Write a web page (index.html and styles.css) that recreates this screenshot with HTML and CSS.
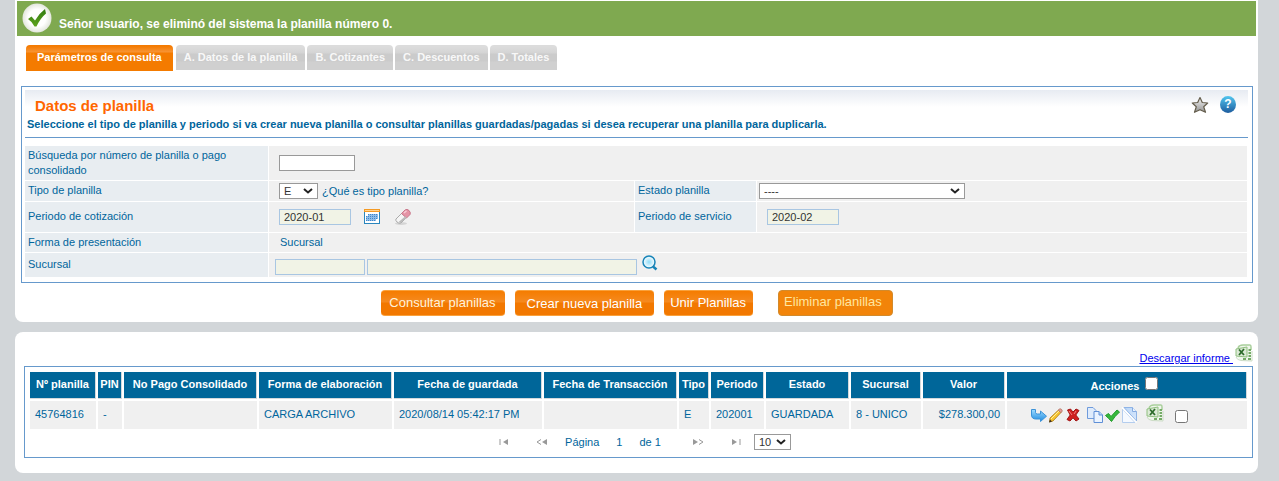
FILE: index.html
```html
<!DOCTYPE html>
<html lang="es">
<head>
<meta charset="utf-8">
<title>Datos de planilla</title>
<link rel="stylesheet" href="styles.css">
</head>
<body>
<svg class="defs" width="0" height="0" aria-hidden="true">
  <defs>
    <linearGradient id="gGrey" x1="0" y1="0" x2="0" y2="1"><stop offset="0" stop-color="#f4f4f4"/><stop offset="1" stop-color="#949494"/></linearGradient>
    <linearGradient id="gArrow" x1="0" y1="0" x2="0" y2="1"><stop offset="0" stop-color="#9fdcff"/><stop offset="1" stop-color="#1e8be0"/></linearGradient>
    <linearGradient id="gPage" x1="0" y1="0" x2="1" y2="1"><stop offset="0" stop-color="#b9d6f8"/><stop offset="1" stop-color="#d9e8fc"/></linearGradient>
    <radialGradient id="gLens"><stop offset="0" stop-color="#8fdcf8"/><stop offset="1" stop-color="#ffffff"/></radialGradient>
    <radialGradient id="gSeal"><stop offset="0.6" stop-color="#ffffff"/><stop offset="1" stop-color="#e2e6dc"/></radialGradient>
    <linearGradient id="gCheck" x1="0" y1="0" x2="0" y2="1"><stop offset="0" stop-color="#2f7a10"/><stop offset="1" stop-color="#5fa41e"/></linearGradient>
    <symbol id="excel" viewBox="0 0 18 18">
      <path d="M3 1 15 1 16 3 16 17 5 16 1 12Z" fill="#f0f6ec"/>
      <path d="M3 4Q4 1 8 1H15Q16 1 16 3V6" fill="none" stroke="#a9cf9c" stroke-width="1.500"/>
      <path d="M1 5 12 3V13L1 12Z" fill="#dcead6" stroke="#8fc07f"/>
      <path d="M4 5.500 9 11M9 5 4 11" stroke="#2d6b2b" stroke-width="1.800"/>
      <path d="M13.500 6h2.500M13.500 9h2.500M13.500 12h2.500M8 15h3M13 15h3" stroke="#74ab66" stroke-width="2"/>
      <path d="M1 13Q2 16 6 16.500L17 17V7" fill="none" stroke="#cbdcc5"/>
    </symbol>
  </defs>
</svg>

<main class="page">
  <section class="panel panel-top">
    <div class="notice" role="status">
      <svg class="seal" width="30" height="30" viewBox="0 0 30 30" aria-hidden="true"><circle cx="15" cy="15" r="14.500" fill="url(#gSeal)"/><path d="M6 16 9.500 13.500 13 17.500Q17 10.500 23 6L24 10.500Q18.500 15 14.500 23.500H12.500Q10 18.500 6 16Z" fill="url(#gCheck)"/></svg>
      <p>Señor usuario, se eliminó del sistema la planilla número 0.</p>
    </div>

    <nav class="tabs">
      <button class="tab tab-on" type="button">Parámetros de consulta</button>
      <button class="tab" type="button">A. Datos de la planilla</button>
      <button class="tab" type="button">B. Cotizantes</button>
      <button class="tab" type="button">C. Descuentos</button>
      <button class="tab" type="button">D. Totales</button>
    </nav>

    <form class="box">
      <header class="box-head">
        <div class="head-text">
          <h1>Datos de planilla</h1>
          <p>Seleccione el tipo de planilla y periodo si va crear nueva planilla o consultar planillas guardadas/pagadas si desea recuperar una planilla para duplicarla.</p>
        </div>
        <div class="head-icons">
          <button class="icon" type="button" aria-label="Favorito"><svg width="18" height="18" viewBox="0 0 18 18"><path d="M9 1.500 11.300 6.500 16.700 7 12.700 10.700 14.500 16.300 9 13.700 3.500 16.300 5.300 10.700 1.300 7 6.700 6.500Z" fill="url(#gGrey)" stroke="#645d4c" stroke-width="1.200" stroke-linejoin="round"/></svg></button>
          <button class="icon help" type="button" aria-label="Ayuda">?</button>
        </div>
      </header>

      <table class="fields">
        <colgroup><col class="c-label"><col class="c-value"><col class="c-label2"><col></colgroup>
        <tr class="r-tall">
          <th><label for="num">Búsqueda por número de planilla o pago consolidado</label></th>
          <td colspan="3"><div class="line"><input class="text" id="num" type="text"></div></td>
        </tr>
        <tr class="r-type">
          <th><label for="tipo">Tipo de planilla</label></th>
          <td><div class="line"><select class="sel-type" id="tipo"><option>E</option></select><span class="hint">¿Qué es tipo planilla?</span></div></td>
          <th><label for="estado">Estado planilla</label></th>
          <td class="flush"><div class="line"><select class="sel-state" id="estado"><option>----</option></select></div></td>
        </tr>
        <tr class="r-mid">
          <th><label for="cot">Periodo de cotización</label></th>
          <td><div class="line">
            <input class="text shaded" id="cot" type="text" value="2020-01" readonly>
            <button class="icon calendar" type="button" aria-label="Calendario"><svg width="16" height="16" viewBox="0 0 16 16" shape-rendering="crispEdges"><path fill="#fff" stroke="#2a86bd" d="M.5.500h15v14H.5z"/><path fill="#f49a24" d="M0 0h16v3H0z"/><path fill="#ffd391" d="M1 1h14v1H1z"/><path fill="#8fbde8" d="M4 5h10v5h-2v2H2V7h2z"/><path stroke="#3f86cc" stroke-dasharray="1 1" d="M4 5.500h10M2 7.500h12M2 9.500h12M2 11.500h10"/></svg></button>
            <button class="icon" type="button" aria-label="Borrar"><svg width="18" height="18" viewBox="0 0 18 18"><ellipse cx="7" cy="15.500" rx="6" ry="1.500" fill="#d4d4d4"/><path d="M2 11 8 5 13 9 7 15Q5 16 3 14T2 11Z" fill="#f5f5f5" stroke="#aaa"/><path d="M7.500 5.500 11 2Q13 .5 15 2.500T16 6.500L12.500 10Z" fill="#e594a6" stroke="#c8788b"/><path d="M10 5 12.500 2.700" stroke="#f8cbd4" stroke-width="1.500"/><path d="M5.500 14.500 12 9" stroke="#bbb" stroke-width="2"/></svg></button>
          </div></td>
          <th><label for="serv">Periodo de servicio</label></th>
          <td><div class="line"><input class="text shaded" id="serv" type="text" value="2020-02" readonly></div></td>
        </tr>
        <tr class="r-short">
          <th>Forma de presentación</th>
          <td colspan="3"><div class="line plain">Sucursal</div></td>
        </tr>
        <tr class="r-last">
          <th><label for="suc">Sucursal</label></th>
          <td class="near" colspan="3"><div class="line">
            <input class="text shaded code" id="suc" type="text" readonly>
            <input class="text shaded name" type="text" aria-label="Nombre de sucursal" readonly>
            <button class="icon search" type="button" aria-label="Buscar"><svg width="16" height="16" viewBox="0 0 16 16"><circle cx="7" cy="7" r="6" fill="url(#gLens)" stroke="#1784b8" stroke-width="1.500"/><path d="M11 11.500 14.500 14.500" stroke="#1784b8" stroke-width="2.500"/></svg></button>
          </div></td>
        </tr>
      </table>
    </form>

    <div class="actions">
      <button class="btn" type="button">Consultar planillas</button>
      <button class="btn btn-low" type="button">Crear nueva planilla</button>
      <button class="btn btn-slim" type="button">Unir Planillas</button>
      <button class="btn btn-off" type="button">Eliminar planillas</button>
    </div>
  </section>

  <section class="panel panel-list">
    <div class="report"><a href="#informe">Descargar informe&nbsp;</a><svg width="18" height="18" aria-hidden="true"><use href="#excel"/></svg></div>
    <div class="list">
      <table class="data">
        <colgroup><col class="w66"><col class="w24"><col class="w133"><col class="w133"><col class="w148"><col class="w133"><col class="w30"><col class="w53"><col class="w83"><col class="w70"><col class="w82"><col></colgroup>
        <thead>
          <tr><th>Nº planilla</th><th>PIN</th><th>No Pago Consolidado</th><th>Forma de elaboración</th><th>Fecha de guardada</th><th>Fecha de Transacción</th><th>Tipo</th><th>Periodo</th><th>Estado</th><th>Sucursal</th><th>Valor</th><th><label class="all">Acciones <input type="checkbox"></label></th></tr>
        </thead>
        <tbody>
          <tr><td>45764816</td><td>-</td><td></td><td>CARGA ARCHIVO</td><td>2020/08/14 05:42:17 PM</td><td></td><td>E</td><td>202001</td><td>GUARDADA</td><td>8 - UNICO</td><td class="num">$278.300,00</td>
          <td class="tools-cell"><div class="tools">
            <button class="icon" type="button" aria-label="Abrir"><svg width="16" height="16" viewBox="0 0 16 16"><path d="M.5 2.500H4.500V5.500Q4.500 7 6.500 7H9.500V4L15.500 9.200 9.500 14.500V12H5Q.5 12 .5 8Z" fill="url(#gArrow)" stroke="#3c93d8"/></svg></button>
            <button class="icon" type="button" aria-label="Editar"><svg width="16" height="16" viewBox="0 0 16 16"><path d="M2 11 10.500 3 13 5.500 5 14 1.500 15Z" fill="#f8c42c" stroke="#a87a1c" stroke-width=".8"/><path d="M10.300 3 12 1.700Q14 2 14.300 4L13 5.700Z" fill="#e7a09a" stroke="#b06c5c" stroke-width=".8"/><path d="M3 12 11 4" stroke="#fff0a0"/><path d="M1 15.500 2 12.500 4 14.500Z" fill="#3a2d20"/></svg></button>
            <button class="icon" type="button" aria-label="Eliminar"><svg width="16" height="16" viewBox="0 0 16 16"><path d="M2.500 3 5.500 2 8 5 11 2 14 3.500 10.800 8 14 12 11 14 8 10.800 5 14 2 12.500 5.200 8Z" fill="#d01f1f" stroke="#a11515"/><path d="M4 4 7 8M11 4 9 7" stroke="#f08080"/></svg></button>
            <button class="icon gap-group" type="button" aria-label="Copiar"><svg width="16" height="16" viewBox="0 0 16 16"><path d="M.5.500H6L9 3.500V11.500H.5Z" fill="#deebfc" stroke="#6f9bdc"/><path d="M7 4.500H12L15.500 8V15.500H7Z" fill="#eaf3ff" stroke="#5f8fd6"/><path d="M12 4.500V8H15.500" fill="#b9d4f8" stroke="#5f8fd6"/></svg></button>
            <button class="icon" type="button" aria-label="Validar"><svg width="16" height="16" viewBox="0 0 16 16"><path d="M1.500 8.500 4.500 6.500 7 9.500 13 3 15.500 5Q10.500 9.500 7.500 14.500Q4.500 11 1.500 8.500Z" fill="#35b83a" stroke="#229a2b"/></svg></button>
            <button class="icon" type="button" aria-label="Ver detalle"><svg width="16" height="16" viewBox="0 0 16 16"><path d="M1.500 2V15.500H14Z" fill="#f5f9ff" stroke="#b4cdee"/><path d="M3 .5H11.500L15.500 4.500V14Z" fill="url(#gPage)" stroke="#8fb4e6"/><path d="M11.500 .5V4.500H15.500" fill="#eaf3ff" stroke="#86abe0"/><path d="M1 .5 15.500 15.500" stroke="#fff" stroke-width="1.500"/></svg></button>
            <button class="icon gap-small" type="button" aria-label="Exportar"><svg width="18" height="18"><use href="#excel"/></svg></button>
            <input class="gap-check" type="checkbox" aria-label="Seleccionar planilla">
          </div></td></tr>
        </tbody>
      </table>
      <div class="pager">
        <button class="icon" type="button" aria-label="Primera"><svg width="10" height="8" viewBox="0 0 10 8"><path d="M1 1v6" stroke="#999"/><path d="M9 1v6L4 4Z" fill="#999"/></svg></button>
        <button class="icon prev" type="button" aria-label="Anterior"><svg width="12" height="8" viewBox="0 0 12 8"><path d="M5 1.500 1 4 5 6.500" fill="none" stroke="#999"/><path d="M11 1v6L6 4Z" fill="#999"/></svg></button>
        <span>Página</span><span>1</span><span>de 1</span>
        <button class="icon next" type="button" aria-label="Siguiente"><svg width="12" height="8" viewBox="0 0 12 8"><path d="M1 1v6L6 4Z" fill="#999"/><path d="M7 1.500 11 4 7 6.500" fill="none" stroke="#999"/></svg></button>
        <button class="icon last" type="button" aria-label="Última"><svg width="10" height="8" viewBox="0 0 10 8"><path d="M1 1v6L6 4Z" fill="#999"/><path d="M9 1v6" stroke="#999"/></svg></button>
        <select class="sel-rows" aria-label="Filas por página"><option>10</option></select>
      </div>
    </div>
  </section>
</main>
</body>
</html>
```

FILE: styles.css
```css
* { box-sizing: border-box; }

body {
  margin: 0;
  background: #d2d6d9;
  color: #00659c;
  font: 11px/15px "Liberation Sans", Arial, sans-serif;
}

h1, p { margin: 0; }
button, input, select { font: inherit; }
svg { display: block; }
.defs { position: absolute; }

.page {
  display: flex;
  flex-direction: column;
  gap: 10px;
  padding: 0 21px 8px 15px;
}

.panel { background: #fff; border-radius: 8px; }

.panel-top {
  padding: 1px 5px 6px 6px;
  border-radius: 0 0 8px 8px;
}

.icon {
  flex: none;
  margin: 0;
  padding: 0;
  border: 0;
  background: none;
}

/* Notice */
.notice {
  display: flex;
  gap: 7px;
  height: 35px;
  margin: 0 -3px 0 -4px;
  padding: 2px 5px;
  background: #7fa950;
  color: #fff;
  font-size: 12px;
  font-weight: bold;
}

.seal { flex: none; }
.notice p { padding-top: 14px; }

/* Tabs */
.tabs {
  display: flex;
  align-items: flex-start;
  gap: 2px;
  padding: 9px 5px 15px;
}

.tab {
  height: 25px;
  padding: 0 8px;
  border: 0;
  border-radius: 4px 4px 0 0;
  background: linear-gradient(#dcdcdc 0 2px, #d4d4d4 8px, #cbcbcb 9px 16px, #d0d0d0 17px);
  color: #f8f8f8;
  font-weight: bold;
  white-space: nowrap;
}

.tab-on {
  height: 26px;
  margin-right: 1px;
  padding: 0 11px 2px;
  background: linear-gradient(#f47a00 0 1px, #f79434 7px, #f47b00 8px);
  color: #fff;
}

/* Query form */
.box {
  padding: 3px 4px 4px 3px;
  border: 1px solid #6699cc;
}

.box-head {
  display: flex;
  justify-content: space-between;
  height: 48px;
  margin-bottom: 8px;
  padding: 6px 12px 0 2px;
  border-bottom: 1px solid #6699cc;
  background: linear-gradient(#e7ebf2, #fff 17px);
  font-weight: bold;
}

.box-head h1 {
  padding-left: 8px;
  color: #ff6600;
  font-size: 15px;
  line-height: 20px;
}

.head-text p { padding-top: 1px; }
.head-icons { display: flex; align-items: flex-start; gap: 11px; }

.help {
  width: 16px;
  height: 17px;
  border-radius: 50%;
  background: linear-gradient(#52c6ef, #1d5c9e);
  color: #fff;
  font-size: 12px;
  font-weight: bold;
  line-height: 17px;
}

.fields {
  width: 100%;
  border-spacing: 0;
  table-layout: fixed;
}

.fields th, .fields td {
  padding: 0 3px;
  border: solid #fff;
  border-width: 0 1px 1px 0;
  text-align: left;
}

.fields th {
  padding-bottom: 1px;
  background: #e8edf1;
  font-weight: normal;
}

.fields td { padding-left: 10px; background: #f0f0f0; }
.fields .flush { padding-left: 2px; }
.fields .near { padding-left: 6px; }
.fields .r-tall th { padding: 2px 40px 2px 3px; }

.c-label { width: 244px; }
.c-value { width: 366px; }
.c-label2 { width: 122px; }
.r-tall { height: 35px; }
.r-type { height: 21px; }
.r-short { height: 20px; }
.r-mid { height: 31px; }
.r-last { height: 25px; }

.line { display: flex; align-items: center; }
.hint { padding-left: 4px; }
.plain { padding-left: 1px; }

.text {
  width: 76px;
  height: 16px;
  padding: 0 4px;
  border: 1px solid #999;
  background: #fff;
  color: #333;
}

.text.shaded {
  width: 72px;
  border-color: #a9c6e2;
  background: #f1f3e6;
}

.text.code { width: 90px; margin: 4px 2px 0 0; }
.text.name { width: 270px; margin: 4px 5px 0 0; }
.calendar { margin: 0 14px 0 13px; }
.search { margin-bottom: 4px; }

select {
  appearance: none;
  height: 16px;
  padding: 0 4px;
  border: 1px solid #999;
  border-radius: 0;
  background: #fff url("data:image/svg+xml,%3Csvg xmlns='http://www.w3.org/2000/svg' width='10' height='6'%3E%3Cpath d='M1 1 5 4.500 9 1' fill='none' stroke='%23222' stroke-width='2'/%3E%3C/svg%3E") no-repeat right 4px center;
  color: #333;
}

.sel-type { width: 39px; }
.sel-state { width: 206px; }

/* Buttons */
.actions {
  display: flex;
  justify-content: center;
  gap: 10px;
  padding-top: 7px;
}

.btn {
  height: 26px;
  padding: 0 9px 2px 8px;
  border: 1px solid #f9a13c;
  border-width: 1px 0;
  border-radius: 4px;
  background: linear-gradient(#f57c00, #f58a20 11px, #f27800 12px);
  color: #fff3dc;
  font-size: 13px;
  white-space: nowrap;
}

.btn-low { padding: 0 12px; color: #fff; }
.btn-slim { padding: 0 7px 2px 6px; color: #fff; }

.btn-off {
  margin-left: 15px;
  padding: 0 10px 3px 5px;
  border: 1px solid #d28a2c;
  background: #f28409;
  color: #ffe7a0;
}

/* Result list */
.panel-list { padding: 12px 5px 15px 9px; }

.report {
  display: flex;
  justify-content: flex-end;
  gap: 2px;
  height: 22px;
}

.report a { padding-top: 7px; color: #0000ee; }

.list { padding: 3px; border: 1px solid #6699cc; }

.data {
  width: 100%;
  border-spacing: 2px;
  table-layout: fixed;
}

.data th {
  height: 27px;
  padding: 0 0 2px;
  border: solid #d4d9dc;
  border-width: 0 1px 1px 0;
  background: #006699;
  color: #fff;
  white-space: nowrap;
}

.data td {
  height: 28px;
  padding: 0 5px 2px;
  background: #f0f0f0;
  white-space: nowrap;
}

.data .num { text-align: right; }

.w24 { width: 24px; }
.w30 { width: 30px; }
.w53 { width: 53px; }
.w66 { width: 66px; }
.w70 { width: 70px; }
.w82 { width: 82px; }
.w83 { width: 83px; }
.w133 { width: 133px; }
.w148 { width: 148px; }

.data input { flex: none; width: 13px; height: 13px; margin: 0; }

.all {
  display: flex;
  justify-content: center;
  align-items: flex-start;
  gap: 6px;
  padding: 5px 4px 0 0;
  line-height: 19px;
}

.data .tools-cell { padding: 0 24px; }
.tools { display: flex; align-items: center; gap: 1px; }
.gap-group { margin-left: 5px; }
.gap-small { margin: 0 0 4px 8px; }
.gap-check.gap-check { margin: 2px 0 0 10px; }

.pager {
  display: flex;
  justify-content: center;
  align-items: center;
  gap: 17px;
  padding: 3px 0 4px 13px;
}

.prev { margin-left: 10px; }
.next { margin-left: 14px; }
.last { margin-left: 10px; }
.sel-rows { width: 37px; margin-left: -4px; }
```
